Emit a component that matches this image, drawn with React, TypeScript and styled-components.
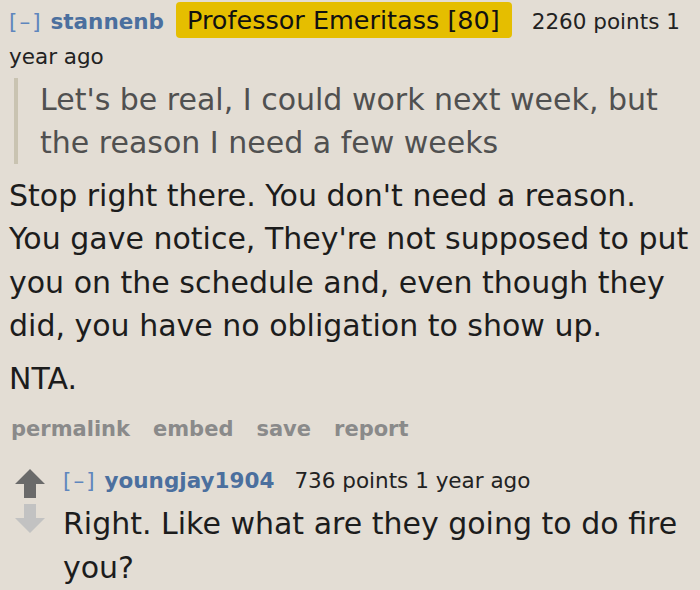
import React from "react";
import styled, { createGlobalStyle } from "styled-components";

const Global = createGlobalStyle`
  html, body { margin: 0; padding: 0; background: #e3ddd4; }
  body { font-family: "DejaVu Sans", Verdana, sans-serif; }
`;

const Page = styled.div`
  width: 700px;
  height: 590px;
  overflow: hidden;
  box-sizing: border-box;
  padding: 2px 10px 0 9px;
  background: #e3ddd4;
`;

const Tagline = styled.div`
  font-size: 21.5px;
  line-height: 35px;
  color: #222;
`;

const Expand = styled.span`
  color: #5f86bd;
  letter-spacing: 2px;
  margin-right: 8px;
`;

const Author = styled.span`
  color: #4b6f9e;
  font-weight: bold;
  margin-right: 12px;
`;

const Flair = styled.span`
  display: inline-block;
  background: #e5be00;
  color: #111;
  border-radius: 4px;
  font-size: 25.5px;
  padding: 3.5px 12px 3.5px 11px;
  line-height: 29px;
  margin-right: 12px;
`;

const Score = styled.span`
  margin-left: 8px;
`;

const Quote = styled.blockquote`
  margin: 4px 0 10px 5px;
  padding-left: 22px;
  border-left: 4px solid #c9c3b1;
  color: #505050;
  font-size: 30px;
  line-height: 43px;
`;

const Para = styled.p`
  margin: 0 0 9px 0;
  color: #1c1c1c;
  font-size: 30px;
  line-height: 43.5px;
`;

const Buttons = styled.ul`
  list-style: none;
  margin: 14px 0 0 0;
  padding: 0 0 0 2px;
  display: flex;
  gap: 23px;
  font-size: 21px;
  font-weight: bold;
  color: #8a8a8a;
  line-height: 30px;
`;

const Child = styled.div`
  display: flex;
  margin-top: 19px;
`;

const MidCol = styled.div`
  width: 54px;
  box-sizing: border-box;
  padding-left: 6px;
  padding-top: 6px;
  display: flex;
  flex-direction: column;
  gap: 6px;
  flex-shrink: 0;
`;

const Entry = styled.div`
  flex: 1;
`;

const ChildBody = styled.p`
  margin: 4px 0 0 0;
  color: #1c1c1c;
  font-size: 30px;
  line-height: 44px;
`;

const Arrow = ({ up }: { up?: boolean }) => (
  <svg width="30" height="29" viewBox="0 0 30 29">
    {up ? (
      <path d="M15 0 L30 15 L21 15 L21 29 L9 29 L9 15 L0 15 Z" fill="#6a6a6a" />
    ) : (
      <path d="M9 0 L21 0 L21 14 L30 14 L15 29 L0 14 L9 14 Z" fill="#c2c2c2" />
    )}
  </svg>
);

export default function App() {
  return (
    <Page>
      <Global />
      <Tagline>
        <Expand>[–]</Expand>
        <Author>stannenb</Author>
        <Flair>Professor Emeritass [80]</Flair>
        <Score>2260 points 1 year ago</Score>
      </Tagline>
      <Quote>Let's be real, I could work next week, but the reason I need a few weeks</Quote>
      <Para>
        Stop right there. You don't need a reason. You gave notice, They're not supposed to put you on the
        schedule and, even though they did, you have no obligation to show up.
      </Para>
      <Para>NTA.</Para>
      <Buttons>
        <li>permalink</li>
        <li>embed</li>
        <li>save</li>
        <li>report</li>
      </Buttons>
      <Child>
        <MidCol>
          <Arrow up />
          <Arrow />
        </MidCol>
        <Entry>
          <Tagline>
            <Expand>[–]</Expand>
            <Author>youngjay1904</Author>
            <Score>736 points 1 year ago</Score>
          </Tagline>
          <ChildBody>Right. Like what are they going to do fire you?</ChildBody>
        </Entry>
      </Child>
    </Page>
  );
}
